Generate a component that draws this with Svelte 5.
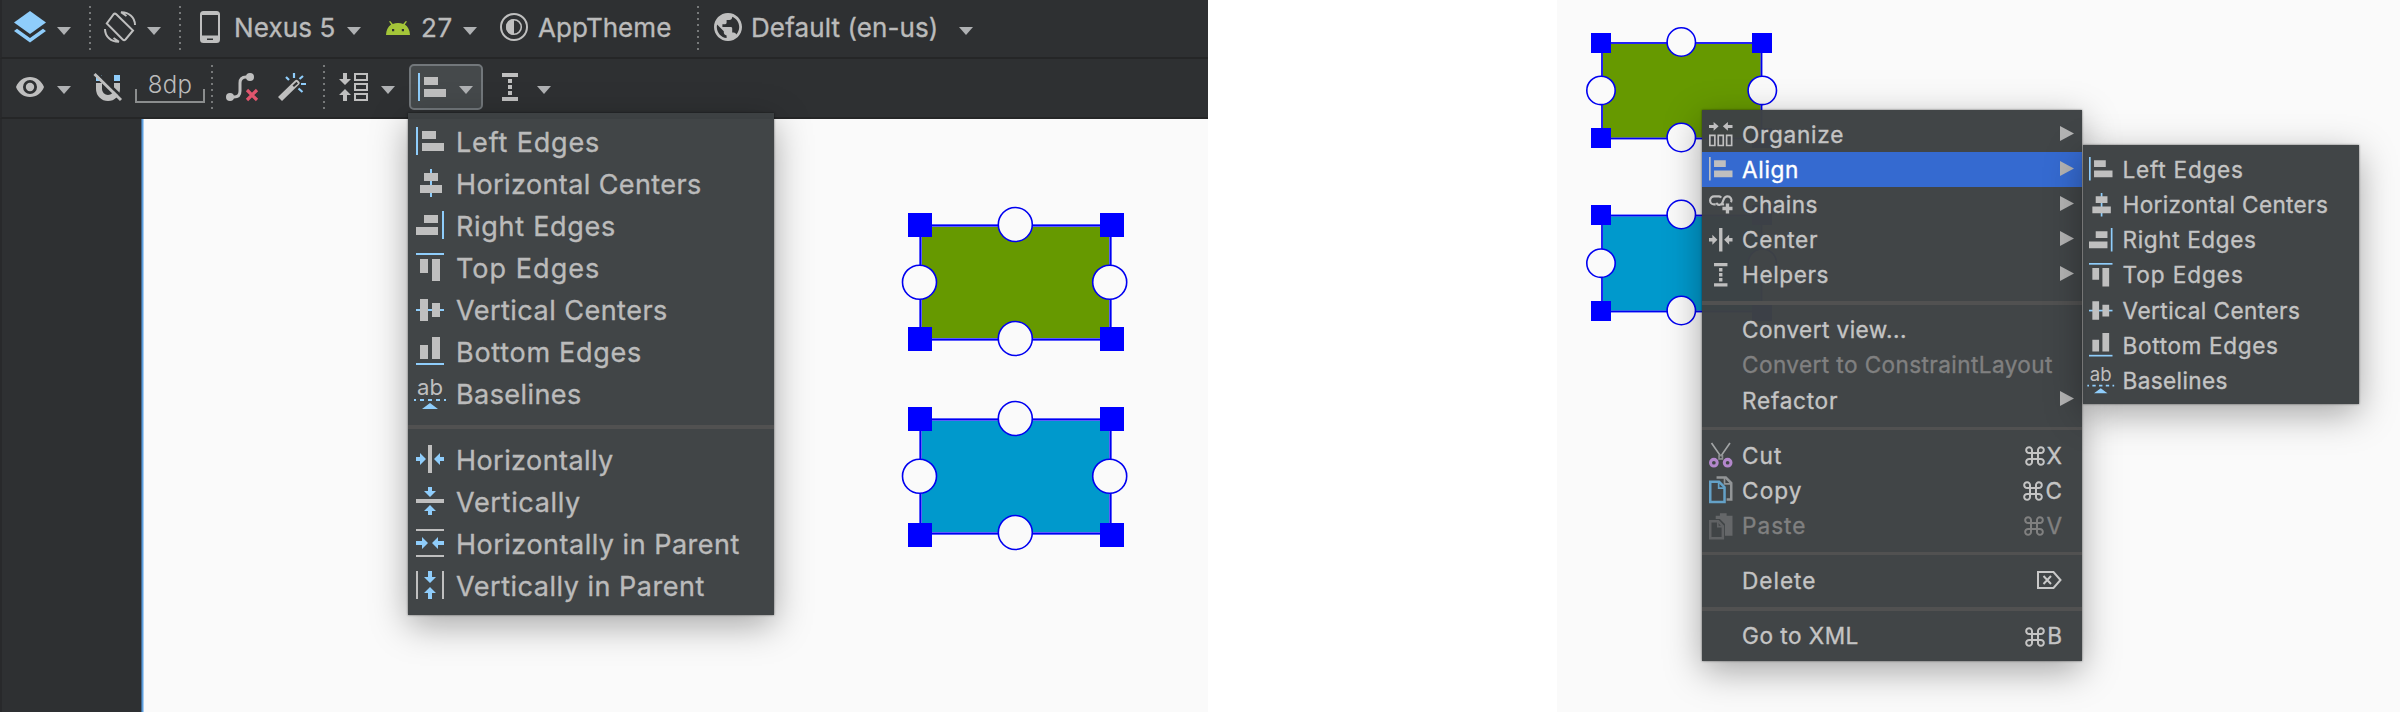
<script>
  const alignItems = [
    { icon: 'left', label: 'Left Edges', w: 141, sw: 118 },
    { icon: 'hcenter', label: 'Horizontal Centers', w: 243, sw: 203 },
    { icon: 'right', label: 'Right Edges', w: 157, sw: 131 },
    { icon: 'top', label: 'Top Edges', w: 141, sw: 118 },
    { icon: 'vcenter', label: 'Vertical Centers', w: 209, sw: 175 },
    { icon: 'bottom', label: 'Bottom Edges', w: 183, sw: 153 },
    { icon: 'baseline', label: 'Baselines', w: 123, sw: 102.5 }
  ];
  const centerItems = [
    { icon: 'horizontal', label: 'Horizontally', w: 155 },
    { icon: 'vertical', label: 'Vertically', w: 122 },
    { icon: 'hparent', label: 'Horizontally in Parent', w: 281 },
    { icon: 'vparent', label: 'Vertically in Parent', w: 246 }
  ];
  const contextGroups = [
    [
      { icon: 'organize', label: 'Organize', w: 99, sub: true },
      { icon: 'left', label: 'Align', w: 54, sub: true, active: true },
      { icon: 'chains', label: 'Chains', w: 73, sub: true },
      { icon: 'horizontal', label: 'Center', w: 73, sub: true },
      { icon: 'helpers', label: 'Helpers', w: 84, sub: true }
    ],
    [
      { label: 'Convert view...', w: 162 },
      { label: 'Convert to ConstraintLayout', w: 308, off: true },
      { label: 'Refactor', w: 93, sub: true }
    ],
    [
      { icon: 'cut', label: 'Cut', w: 37, key: 'X' },
      { icon: 'copy', label: 'Copy', w: 57, key: 'C' },
      { icon: 'paste', label: 'Paste', w: 61, key: 'V', off: true }
    ],
    [{ label: 'Delete', w: 71, del: true }],
    [{ label: 'Go to XML', w: 114, key: 'B' }]
  ];

  // Tracks a label so that its glyphs span the given width.
  function fit(node, width) {
    const n = node.textContent.length - 1;
    const range = document.createRange();
    range.selectNodeContents(node);
    node.style.letterSpacing = (width + 2.3 - range.getBoundingClientRect().width) / n + 'px';
  }
</script>

{#snippet caret()}
  <svg class="caret" width="14" height="8" viewBox="0 0 14 8"><path d="M0 0H14L7 8Z" fill="#afb1b3" /></svg>
{/snippet}

{#snippet glyph(name)}
  <svg class="glyph" viewBox="0 0 28 28">
    {#if name === 'left'}
      <path class="ac" d="M0 0h2v28H0z" /><path class="fg" d="M6 4h14v8H6zM6 16h22v8H6z" />
    {:else if name === 'hcenter'}
      <path class="ac" d="M14 0h2v28h-2z" /><path class="fg" d="M8 4h14v8H8zM4 16h22v8H4z" />
    {:else if name === 'right'}
      <path class="ac" d="M26 0h2v28h-2z" /><path class="fg" d="M8 4h14v8H8zM0 16h22v8H0z" />
    {:else if name === 'top'}
      <path class="ac" d="M0 0h28v2H0z" /><path class="fg" d="M4 6h8v14H4zM16 6h8v22h-8z" />
    {:else if name === 'vcenter'}
      <path class="ac" d="M0 14h28v2H0z" /><path class="fg" d="M4 4h8v22H4zM16 8h8v14h-8z" />
    {:else if name === 'bottom'}
      <path class="ac" d="M0 26h28v2H0z" /><path class="fg" d="M4 8h8v14H4zM16 0h8v22h-8z" />
    {:else if name === 'baseline'}
      <text class="fg" x="1" y="16" font-size="22" textLength="26" lengthAdjust="spacingAndGlyphs">ab</text>
      <path class="ac" d="M-2 20h2v2h-2zM4 20h4v2h-4zM12 20h4v2h-4zM20 20h4v2h-4zM28 20h2v2h-2zM14 24L22 30H6z" />
    {:else if name === 'horizontal'}
      <path class="fg" d="M12 0h4v28h-4z" />
      <path class="ac" d="M0 12h4V8l6 6-6 6v-4H0zM28 12h-4V8l-6 6 6 6v-4h4z" />
    {:else if name === 'vertical'}
      <path class="fg" d="M0 12h28v4H0z" />
      <path class="ac" d="M12 0v4H8l6 6 6-6h-4V0zM12 28v-4H8l6-6 6 6h-4v4z" />
    {:else if name === 'hparent'}
      <path class="fg" d="M0 0h28v2H0zM0 26h28v2H0z" />
      <path class="ac" d="M0 12h6V8l6 6-6 6v-4H0zM28 12h-6V8l-6 6 6 6v-4h6z" />
    {:else if name === 'vparent'}
      <path class="fg" d="M0 0h2v28H0zM26 0h2v28h-2z" />
      <path class="ac" d="M12 0v6H8l6 6 6-6h-4V0zM12 28v-6H8l6-6 6 6h-4v6z" />
    {:else if name === 'helpers'}
      <path class="fg" d="M6 0h16v4H6zM12 6h4v4h-4zM12 12h4v4h-4zM12 18h4v4h-4zM6 24h16v4H6z" />
    {:else if name === 'pack'}
      <path class="fg" d="M4 0h4v6h4l-6 6-6-6h4zM4 28h4v-6h4l-6-6-6 6h4z" />
      <path class="fg" fill-rule="evenodd" d="M15 0h14v8H15zM17 2v4h10V2zM15 10h14v8H15zM17 12v4h10v-4zM15 20h14v8H15zM17 22v4h10v-4z" />
    {:else if name === 'organize'}
      <path class="fg" d="M0 3.5h5.500V0l6 5.200-6 5.200V7H0zM28 3.500h-5.500V0l-6 5.200 6 5.200V7H28z" />
      <path class="fg" fill-rule="evenodd" d="M0 15h8v14H0zM2 17v10h4V17zM10 15h8v14h-8zM12 17v10h4V17zM20 15h8v14h-8zM22 17v10h4V17z" />
    {:else if name === 'chains'}
      <g fill="none" stroke="#bfbfbf" stroke-width="2.600">
        <path d="M8 13.500H6a4.700 4.700 0 0 1 0-9.400H12a3.500 3.500 0 0 1 2.500 1.500" />
        <path d="M9 11.500c1 4 6 3 7 0l1.500-4c.8-2 2-3.400 4.500-3.400a4.800 4.800 0 0 1 4.300 7" />
        <path d="M14.500 13.500H18" />
      </g>
      <path class="fg" d="M20 12.500h4v4h4v4h-4v4h-4v-4h-4v-4h4z" />
    {:else if name === 'cut'}
      <path d="M3 0L15.500 18M25 0L12.500 18" fill="none" stroke="#a2a5a6" stroke-width="2" />
      <path d="M11 14h6v6h-6z" fill="#8d8f91" /><circle cx="14" cy="17" r="1.200" fill="#404446" />
      <circle cx="5.800" cy="23.500" r="4" fill="none" stroke="#b387cc" stroke-width="3.600" />
      <circle cx="22.200" cy="23.500" r="4" fill="none" stroke="#b387cc" stroke-width="3.600" />
    {:else if name === 'copy'}
      <path d="M9 -.5h11L26.500 6v19.500H21" fill="none" stroke="#929597" stroke-width="3" /><path d="M18.500 0v7H27" fill="none" stroke="#929597" stroke-width="2" />
      <path d="M1.500 4.500H12L18.500 11v17.500H1.500z" fill="#404446" stroke="#64a1c7" stroke-width="3" /><path d="M11.500 5v7h7" fill="none" stroke="#64a1c7" stroke-width="2" />
    {:else if name === 'paste'}
      <path d="M8 2h5V-1h8v3h7v24h-9V12l-6-6H8z" fill="#656769" />
      <path d="M1.500 8.500H11l5.500 6v14.500h-15z" fill="#404446" stroke="#606264" stroke-width="3" /><path d="M10.500 9v6H16" fill="none" stroke="#606264" stroke-width="2" />
    {/if}
  </svg>
{/snippet}

{#snippet row(item, width)}
  <div class="row" class:active={item.active} class:off={item.off}>
    <span class="slot">{#if item.icon}{@render glyph(item.icon)}{/if}</span>
    <span class="label" use:fit={width}>{item.label}</span>
    {#if item.sub}
      <svg class="more" width="14" height="15" viewBox="0 0 14 15"><path d="M0 0L14 7.500 0 15Z" fill="#b3b3b3" /></svg>
    {:else if item.key}
      <span class="key">
        <svg width="20" height="20" viewBox="0 0 20 20" fill="none" stroke="currentColor" stroke-width="2"><path d="M7 7V4.200A2.900 2.900 0 1 0 4.200 7H15.800A2.900 2.900 0 1 0 13 4.200V15.800A2.900 2.900 0 1 0 15.800 13H4.200A2.900 2.900 0 1 0 7 15.800Z" /></svg>
        {item.key}
      </span>
    {:else if item.del}
      <svg class="del" width="25" height="18" viewBox="0 0 25 18" fill="none" stroke="#c9c9c9" stroke-width="2"><path d="M1 1H16.500L23.500 9 16.500 17H1ZM6.500 5L14 13M14 5L6.500 13" /></svg>
    {/if}
  </div>
{/snippet}

{#snippet shape(x1, x2, y1, y2, color, sq, r, cxm, dy)}
  <rect x={x1} y={y1} width={x2 - x1} height={y2 - y1} fill={color} stroke="#7272ff" stroke-width={sq === 24 ? 3 : 2} />
  <rect x={x1} y={y1} width={x2 - x1} height={y2 - y1} fill="none" stroke="#0000f0" stroke-width="1.400" />
  {#each [x1, x2 + (sq === 24 ? 2 : 1)] as sx}
    {#each [y1, y2 + dy] as sy}
      <rect x={Math.floor(sx - sq / 2 - 0.1)} y={Math.floor(sy - sq / 2)} width={sq} height={sq} fill="#00f" />
    {/each}
  {/each}
  {#each [[cxm, y1 - 1], [cxm, y2 - 1], [x1 - 1, (y1 + y2) / 2 - 0.3], [x2 - (sq === 24 ? 0.8 : -0.8), (y1 + y2) / 2 - 0.3]] as c}
    <circle cx={c[0]} cy={c[1]} {r} fill="#fafafa" stroke="#0000f0" stroke-width="1.600" />
  {/each}
{/snippet}

<main>
  <section class="editor">
    <div class="bar first">
      <svg class="layers" width="32" height="32" viewBox="0 0 32 32" fill="#8fcdfb"><path d="M16 0L32 11.500 16 23 0 11.500Z" /><path d="M0 20L3 17.800 16 27 29 17.800 32 20 16 31.500Z" /></svg>
      <span class="g11">{@render caret()}</span>
      <i class="dots g18"></i>
      <svg class="g13" width="32" height="32" viewBox="0 0 32 32" fill="none" stroke="#bfbfbf" stroke-width="2"><path d="M9.500 3.300a2 2 0 0 1 2.800 0L29 19.500 21.500 28.500a2 2 0 0 1-2.800 0L2.800 12.500Z" /><path d="M17 1.200C25 1 31 6.500 31 14M17 1.200L22.500 5M15 30.800C7 31 1 25.500 1 18M15 30.800L9.500 27" /></svg>
      <span class="g11">{@render caret()}</span>
      <i class="dots g18"></i>
      <svg class="g19" width="20" height="32" viewBox="0 0 20 32"><path fill="#bfbfbf" fill-rule="evenodd" d="M3.500 0h13A3.500 3.500 0 0 1 20 3.500v25a3.500 3.500 0 0 1-3.500 3.500h-13A3.500 3.500 0 0 1 0 28.500v-25A3.500 3.500 0 0 1 3.500 0ZM2 4v20.500h16V4ZM7 27.500v1.500h6v-1.500Z" /></svg>
      <span class="txt nexus" use:fit={99}>Nexus 5</span>
      <span class="at347">{@render caret()}</span>
      <svg class="android" width="24" height="14" viewBox="0 0 24 14"><path fill="#a4c639" fill-rule="evenodd" d="M0 14C.2 9 2 5.500 5.200 3.500L3 .6 4.200 0 6.800 3C10 1.600 14 1.600 17.200 3L19.800 0 21 .6 18.800 3.500C22 5.500 23.800 9 24 14ZM6 8v2.200h2.200V8ZM15.800 8v2.200H18V8Z" /></svg>
      <span class="txt api" use:fit={29}>27</span>
      <span class="at463">{@render caret()}</span>
      <svg class="theme" width="28" height="28" viewBox="0 0 28 28"><circle cx="14" cy="14" r="13" fill="none" stroke="#bfbfbf" stroke-width="2" /><circle cx="14" cy="14" r="7.300" fill="none" stroke="#bfbfbf" stroke-width="1.600" /><path d="M14 6a8 8 0 0 0 0 16Z" fill="#bfbfbf" /></svg>
      <span class="txt app" use:fit={131}>AppTheme</span>
      <i class="dots at697"></i>
      <svg class="globe" width="28" height="28" viewBox="2 2 20 20" fill="#bfbfbf"><path d="M12 2C6.480 2 2 6.480 2 12s4.480 10 10 10 10-4.480 10-10S17.520 2 12 2zm-1 17.930c-3.950-.49-7-3.850-7-7.930 0-.62.080-1.210.210-1.790L9 15v1c0 1.100.9 2 2 2v1.930zm6.900-2.540c-.26-.81-1-1.390-1.900-1.390h-1v-3c0-.55-.45-1-1-1H8v-2h2c.55 0 1-.45 1-1V7h2c1.100 0 2-.9 2-2v-.41c2.930 1.190 5 4.060 5 7.410 0 2.080-.8 3.970-2.100 5.390z" /></svg>
      <span class="txt locale" use:fit={185}>Default (en-us)</span>
      <span class="at959">{@render caret()}</span>
    </div>
    <div class="bar second">
      <svg class="eye" width="28" height="20" viewBox="0 0 28 20"><path fill="#bfbfbf" fill-rule="evenodd" d="M14 0C7.500 0 2.300 4 0 10c2.300 6 7.500 10 14 10s11.700-4 14-10C25.700 4 20.500 0 14 0ZM14 3a7 7 0 1 1 0 14a7 7 0 0 1 0-14Z" /><circle cx="14" cy="10" r="4.200" fill="#bfbfbf" /></svg>
      <span class="g13 low">{@render caret()}</span>
      <svg class="magnet" width="28" height="28" viewBox="0 0 28 28"><path d="M2 2h6v6H2zM20 2h6v6h-6z" fill="#8fcdfb" /><path d="M2 10h6v6a6 6 0 0 0 12 0v-6h6v6a12 12 0 0 1-24 0z" fill="#bfbfbf" /><path d="M2 -1L29 25" stroke="#2e3032" stroke-width="3" /><path d="M.5 1L27 27" stroke="#bfbfbf" stroke-width="3" /></svg>
      <div class="margin"><span class="dp" use:fit={42}>8dp</span><i></i></div>
      <i class="dots g6"></i>
      <svg class="curve" width="32" height="28" viewBox="0 0 32 28"><path d="M4 24h4c4 0 6-2 6-6v-8c0-4 2-6 6-6h4" fill="none" stroke="#bfbfbf" stroke-width="3" /><circle cx="4" cy="24" r="4" fill="#bfbfbf" /><circle cx="24" cy="4" r="4" fill="#bfbfbf" /><path d="M21 17L31 27M31 17L21 27" stroke="#e0556d" stroke-width="3.200" /></svg>
      <svg class="wand" width="28" height="28" viewBox="0 0 28 28"><path d="M0 24L17 7.500a2 2 0 0 1 3 0l1 1a2 2 0 0 1 0 3L4 28Z" fill="#bfbfbf" /><path d="M14.500 12.500L18.500 8.800 20 10.500 16 14Z" fill="#2e3032" /><path d="M16 0v5M8 4l3 3M25 3l-3.500 3M28 11h-5M20.500 15.500l4 3.500" stroke="#8fcdfb" stroke-width="2.200" /></svg>
      <i class="dots g17"></i>
      <span class="packer">{@render glyph('pack')}</span>
      <span class="g13 low">{@render caret()}</span>
      <button class="pressed">{@render glyph('left')}<span class="g13 low">{@render caret()}</span></button>
      <span class="guide">{@render glyph('helpers')}</span>
      <span class="g13 low">{@render caret()}</span>
    </div>
    <div class="work">
      <aside></aside>
      <div class="edge"></div>
      <div class="canvas"></div>
    </div>
    <svg class="nodes" width="1208" height="712">
      {@render shape(920.5, 1110.5, 225.5, 339.5, '#669900', 24, 17, 1015.3, 0)}
      {@render shape(920.5, 1110.5, 419.5, 533.5, '#0099cc', 24, 17, 1015.3, 2)}
    </svg>
    <div class="menu tool">
      {#each alignItems as item}{@render row(item, item.w)}{/each}
      <hr />
      {#each centerItems as item}{@render row(item, item.w)}{/each}
    </div>
  </section>

  <section class="preview">
    <svg class="nodes" width="843" height="712">
      {@render shape(45, 204.5, 43, 138.5, '#669900', 20, 14.2, 124.3, 0)}
      {@render shape(45, 204.5, 215.5, 311.5, '#0099cc', 20, 14.2, 124.3, 0)}
    </svg>
    <div class="menu small context">
      {#each contextGroups as group, i}
        {#if i}<hr />{/if}
        {#each group as item}{@render row(item, item.w)}{/each}
      {/each}
    </div>
    <div class="menu small submenu">
      {#each alignItems as item}{@render row(item, item.sw)}{/each}
    </div>
  </section>
</main>

<style>
  :global(body) { margin: 0; background: #fff; }
  main {
    display: flex;
    justify-content: space-between;
    width: 2400px;
    height: 712px;
    overflow: hidden;
    font-family: Inter, "Liberation Sans", sans-serif;
    color: #bbb;
  }
  svg { display: block; flex: none; overflow: visible; }
  .editor, .preview { position: relative; height: 712px; }
  .editor { width: 1208px; display: flex; flex-direction: column; overflow: hidden; }
  .preview { width: 843px; background: #fafafa; overflow: hidden; }
  .bar {
    display: flex;
    align-items: center;
    box-sizing: border-box;
    border-left: 2px solid #28292b;
    border-bottom: 2px solid #252627;
    background: #2e3032;
    flex: none;
  }
  .first { height: 59px; padding-left: 12px; padding-bottom: 3px; }
  .second { height: 60px; padding-left: 14px; padding-bottom: 2px; }
  .work { flex: 1; display: flex; }
  aside { width: 139px; border-left: 2px solid #28292b; background: #2e3032; }
  .edge { width: 3px; background: linear-gradient(90deg, #456b93 0 1px, #5c9fde 1px 2px, #a9cdf0 2px 3px); }
  .canvas { flex: 1; background: #fafafa; }
  .first .caret { margin-top: 8px; }
  .low { padding-top: 6px; }
  .g6 { margin-left: 6px; }
  .g11 { margin-left: 11px; }
  .g13 { margin-left: 13px; }
  .g17 { margin-left: 17px; }
  .g18 { margin-left: 18px; }
  .g19 { margin-left: 19px; }
  .dots {
    flex: none;
    width: 2px;
    height: 44px;
    background: repeating-linear-gradient(#77797a 0 2px, transparent 2px 6px);
  }
  .first .dots { margin-top: 2px; }
  .txt, .label, .key { -webkit-text-stroke: 0.350px currentColor; }
  .txt { font-size: 26px; line-height: 32px; white-space: pre; flex: none; padding-top: 1px; }
  .nexus { margin-left: 14px; width: 113px; }
  .android { margin-left: 25px; margin-top: 2px; }
  .api { margin-left: 11px; width: 42px; }
  .theme, .globe { margin-left: 23px; }
  .app { margin-left: 10px; width: 159px; }
  .globe { margin-left: 15px; }
  .locale { margin-left: 9px; width: 208px; }
  .magnet { margin-left: 23px; }
  .margin { display: flex; flex-direction: column; align-items: center; width: 70px; margin-left: 13px; padding-top: 1px; }
  .margin i { box-sizing: border-box; width: 70px; height: 14px; margin-top: -9px; border: 2px solid #8b8d8e; border-top: 0; }
  .dp { font-size: 24px; line-height: 26px; font-weight: 300; }
  .curve { margin-left: 13px; }
  .wand { margin-left: 20px; }
  .packer { margin-left: 14px; width: 29px; }
  .pressed {
    display: flex;
    align-items: center;
    box-sizing: border-box;
    width: 74px;
    height: 46px;
    margin: 0 0 0 14px;
    padding: 0 0 0 7px;
    border: 2px solid #72777b;
    border-radius: 5px;
    background: #45494b;
  }
  .guide { margin-left: 13px; }
  .glyph { width: 28px; height: 28px; }
  .fg { fill: #bfbfbf; }
  .ac { fill: #8fcdfb; }
  .nodes { position: absolute; left: 0; top: 0; }
  .menu {
    position: absolute;
    box-sizing: border-box;
    background: rgba(61, 65, 67, 0.98);
    box-shadow: 0 0 2px rgba(0, 0, 0, 0.55), 0 10px 34px rgba(0, 0, 0, 0.34);
    font-size: 27px;
  }
  .tool { left: 408px; top: 113px; width: 366px; height: 502px; padding-top: 7px; }
  .row { display: flex; align-items: center; height: 42px; padding-left: 8px; }
  .slot { width: 40px; flex: none; }
  .label { white-space: pre; line-height: 1; padding-top: 2px; }
  hr { height: 4px; margin: 11px 0 9px; border: 0; background: #515151; }
  .small { font-size: 22.600px; color: #c4c4c4; }
  .small .row { height: 35.120px; padding-left: 6.600px; }
  .small .slot { width: 33.500px; }
  .small .glyph { width: 23.500px; height: 23.500px; }
  .small hr { height: 3.400px; margin: 9.200px 0 7.500px; }
  .context { left: 145px; top: 109.500px; width: 380px; height: 551.500px; padding-top: 7px; }
  .context .ac { fill: #bfbfbf; }
  .submenu { left: 525.500px; top: 144.500px; width: 276.500px; height: 259.500px; padding-top: 7px; }
  .submenu .row { height: 35.200px; }
  .small .active { background: #356ad0; color: #fff; }
  .small .off { color: #808080; }
  .more { margin-left: auto; margin-right: 8px; margin-top: -2px; }
  .key { display: flex; align-items: center; gap: 2px; margin-left: auto; margin-right: 20px; padding-top: 2px; line-height: 1; }
  .del { margin-left: auto; margin-right: 20px; }
</style>
